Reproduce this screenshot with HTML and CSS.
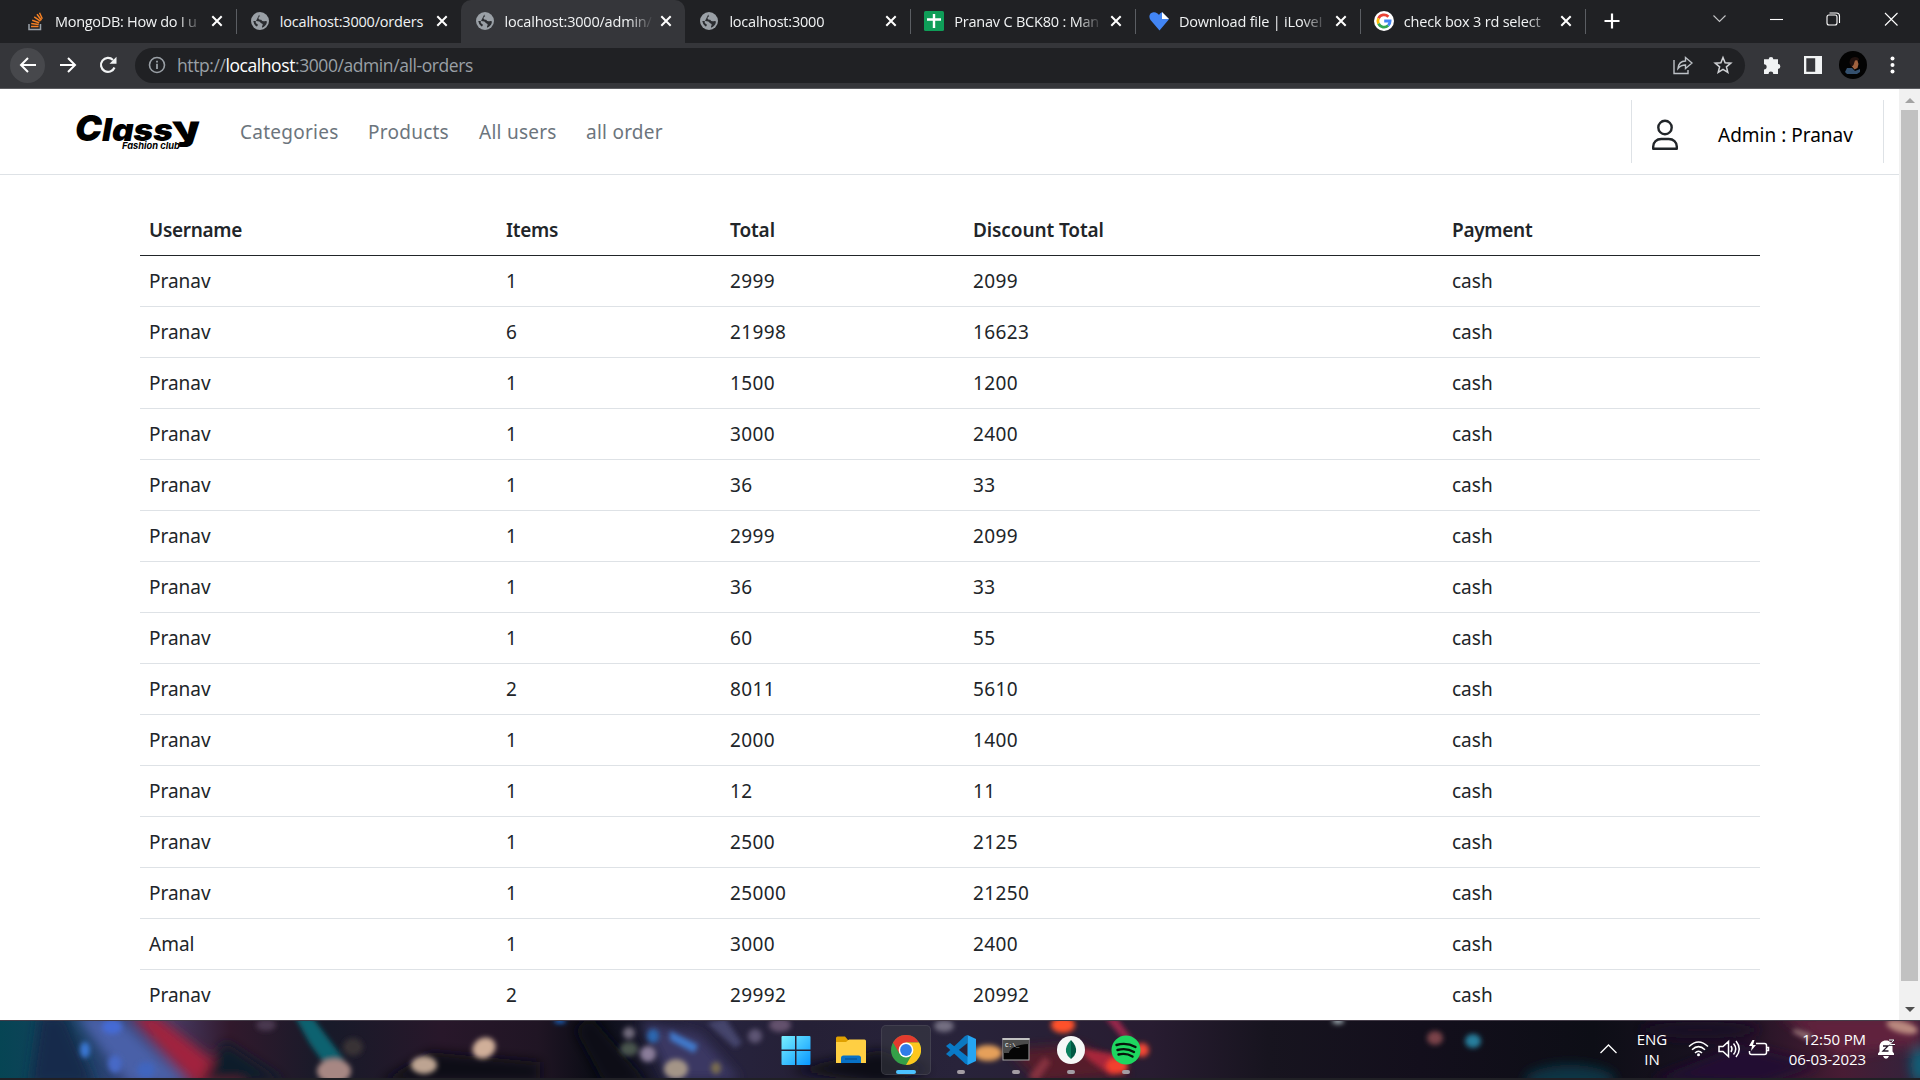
FILE: index.html
```html
<!DOCTYPE html>
<html lang="en">
<head>
<meta charset="utf-8">
<title>All orders</title>
<link rel="stylesheet" href="styles.css">
</head>
<body>
<svg width="0" height="0" class="defs">
  <symbol id="x" viewBox="0 0 12 12"><path d="M1.3 1.3l9.4 9.4M10.7 1.3l-9.4 9.4" stroke="#fff" stroke-width="2" fill="none"/></symbol>
  <symbol id="globe" viewBox="0 0 20 20"><circle cx="10" cy="10" r="9" fill="#9aa0a6"/><path d="M9.500 3q-1 1.600.8 2.100Q8 6 8.600 7.800q.6 1.300 2.600 1 1 2 3.400 1.400 1.500-.5 2.400.3-.5 4.500-5 6.300-.2-2 .6-2.600.6-1.600-1.400-1.900Q9.800 10 6.500 10H3.300q.4 3.500 3.200 5.600 1.500-.5 1.300-2.200-1.800-.7-2.300-2.400" fill="#2b2d31"/></symbol>
</svg>
<div class="screen">
  <header class="tabs">
    <div class="tab"><svg class="fav" viewBox="0 0 20 20"><path d="M4 13v5.500h11.500V13" fill="none" stroke="#9aa3aa" stroke-width="1.500"/><path d="M6 15.500h7.500M6.200 12.600l7.500 1M7.200 9.300l7 2.500M9.200 5.900l6.200 4.200M12 3.200l4.500 6M14.500 1.800l2.800 6" stroke="#f48024" stroke-width="1.500"/></svg><span class="label mongo">MongoDB: How do I u</span><svg class="close"><use href="#x"/></svg></div>
    <div class="tab"><svg class="fav"><use href="#globe"/></svg><span class="label">localhost:3000/orders</span><svg class="close"><use href="#x"/></svg></div>
    <div class="tab active"><svg class="fav"><use href="#globe"/></svg><span class="label">localhost:3000/admin/</span><svg class="close"><use href="#x"/></svg></div>
    <div class="tab"><svg class="fav"><use href="#globe"/></svg><span class="label">localhost:3000</span><svg class="close"><use href="#x"/></svg></div>
    <div class="tab"><svg class="fav" viewBox="0 0 20 20"><rect width="20" height="20" rx="1.500" fill="#0f9d58"/><path d="M3 8.500h14M10 3v14" stroke="#fff" stroke-width="2.400"/></svg><span class="label">Pranav C BCK80 : Man</span><svg class="close"><use href="#x"/></svg></div>
    <div class="tab"><svg class="fav" viewBox="0 0 20 20"><path d="M10.500 19.500L1.500 9C-1 5 1 1.500 4.500 1.200c2.500-.3 4.500 1.300 5.500 2.800.8-1.400 1.700-2.300 3-2.800l7 7z" fill="#4285f4"/><path d="M13 1v7h7z" fill="#fff"/></svg><span class="label">Download file | iLoveI</span><svg class="close"><use href="#x"/></svg></div>
    <div class="tab"><svg class="fav" viewBox="0 0 20 20"><circle cx="10" cy="10" r="10" fill="#fff"/><g fill="none" stroke-width="2.800"><path d="M4.500 7.300a6.100 6.100 0 0 1 9.900-1.500" stroke="#ea4335"/><path d="M4.500 12.700a6.100 6.100 0 0 1 0-5.400" stroke="#fbbc05"/><path d="M14.200 14.400a6.100 6.100 0 0 1-9.700-1.700" stroke="#34a853"/><path d="M10.200 10h5.900a6.100 6.100 0 0 1-1.900 4.400" stroke="#4285f4"/></g></svg><span class="label">check box 3 rd select</span><svg class="close"><use href="#x"/></svg></div>
    <svg class="plus" viewBox="0 0 16 16"><path d="M8 .5v15M.5 8h15" stroke="#fff" stroke-width="2.200"/></svg>
    <svg class="winctl" viewBox="0 0 186 14" fill="none" stroke="#fff" stroke-width="1.100"><path d="M.5 3.500l6 6 6-6" stroke="#c4c5c7"/><path d="M57 7.500h13"/><rect x="114" y="3" width="10" height="10" rx="2"/><path d="M116.500 1h7q3 0 3 3v7"/><path d="M172 1l12.500 12.500M184.500 1L172 13.500"/></svg>
  </header>

  <div class="toolbar">
    <div class="navbtn back"><svg width="18" height="16" viewBox="0 0 18 16"><path d="M17 8H2M9 1L2 8l7 7" fill="none" stroke="#fff" stroke-width="2"/></svg></div>
    <div class="navbtn"><svg width="18" height="16" viewBox="0 0 18 16"><path d="M1 8h15M9 1l7 7-7 7" fill="none" stroke="#fff" stroke-width="2"/></svg></div>
    <div class="navbtn"><svg width="18" height="18" viewBox="0 0 18 18"><path d="M15.500 11.500A7 7 0 1 1 14 4" fill="none" stroke="#f1f3f4" stroke-width="2.200"/><path d="M17.500 .8v7h-7z" fill="#f1f3f4"/></svg></div>
    <div class="omni">
      <svg width="18" height="18" viewBox="0 0 18 18"><circle cx="9" cy="9" r="7.500" fill="none" stroke="#9aa0a6" stroke-width="1.600"/><path d="M9 7.800V13M9 4.800v1.800" stroke="#9aa0a6" stroke-width="1.800"/></svg>
      <span class="url">http://<b>localhost</b>:3000/admin/all-orders</span>
      <svg class="share" width="20" height="20" viewBox="0 0 20 20" fill="none" stroke="#bdc1c6" stroke-width="1.400"><path d="M1 5v13.500h14V15"/><path d="M5 13.500C5.500 8.500 8.500 6 12.500 6V2.500L19 8l-6.500 5.500V10C9 10 7 11 5 13.500z"/></svg>
      <svg width="20" height="20" viewBox="0 0 20 20"><path d="M10 2.500l2.100 5.300 5.700.4-4.400 3.600 1.400 5.600-4.800-3.100-4.800 3.100 1.400-5.600L2.200 8.200l5.700-.4z" fill="none" stroke="#d0d2d5" stroke-width="1.500"/></svg>
    </div>
    <svg class="puzzle" width="20" height="20" viewBox="0 0 20 20"><path d="M2 4.200h4.700a2.300 2.300 0 1 1 4.600 0H16v4.900a2.300 2.300 0 1 1 0 4.700V19h-4.700a2.300 2.300 0 0 0-4.800 0H2v-4.500a2.500 2.500 0 0 0 0-5.300z" fill="#f1f3f4"/></svg>
    <svg class="panel" width="18" height="18" viewBox="0 0 18 18"><path d="M0 0h18v18H0zM2.300 2.300v13.400h8.900V2.300z" fill="#f1f3f4" fill-rule="evenodd"/></svg>
    <svg class="avatar" width="28" height="28" viewBox="0 0 28 28"><circle cx="14" cy="14" r="14" fill="#030303"/><path d="M6 21l2-4 5 0 3 3 5-2 0 3-3 2H8z" fill="#34506e"/><path d="M14 9l4-1 1.500 5-1 4-3 1.500-2.500-3z" fill="#a0623f"/><path d="M10.500 12q0-6 5.500-6 4 0 4 3l-4 .5-1.500 4.500-2 2z" fill="#21120f"/></svg>
    <svg class="dots" width="5" height="18" viewBox="0 0 5 18" fill="#fff"><circle cx="2.500" cy="2.500" r="2"/><circle cx="2.500" cy="9" r="2"/><circle cx="2.500" cy="15.500" r="2"/></svg>
  </div>

  <div class="viewport">
    <main class="page">
      <nav class="topnav">
        <svg class="logo" width="128" height="40" viewBox="0 0 128 40"><g font-family="Inter, sans-serif" font-style="italic" font-weight="900"><text x="0" y="28.500" font-size="36" textLength="27" lengthAdjust="spacingAndGlyphs">C</text><text x="27" y="28.500" font-size="31" textLength="71" lengthAdjust="spacingAndGlyphs">lass</text><text x="100" y="28" font-size="34" font-style="normal" textLength="28" lengthAdjust="spacingAndGlyphs" transform="translate(-5 0) skewX(10)">y</text><text x="47" y="37" font-size="9.500" font-weight="700" textLength="58" lengthAdjust="spacingAndGlyphs">Fashion club</text></g></svg>
        <a class="l1">Categories</a><a class="l2">Products</a><a class="l3">All users</a><a class="l4">all order</a>
        <div class="account">
          <svg width="28" height="32" viewBox="0 0 28 32" fill="none" stroke="#212529" stroke-width="2.400"><circle cx="14" cy="8.500" r="6.700"/><path d="M2.200 29.800v-2.300c0-4.500 3.500-7.500 8-7.500h7.600c4.500 0 8 3 8 7.500v2.300z" stroke-linejoin="round"/></svg>
          <span>Admin : Pranav</span>
        </div>
      </nav>
      <table class="orders">
        <colgroup><col class="c1"><col class="c2"><col class="c3"><col class="c4"><col></colgroup>
        <thead><tr><th>Username</th><th>Items</th><th>Total</th><th>Discount Total</th><th>Payment</th></tr></thead>
        <tbody>
          <tr><td>Pranav</td><td>1</td><td>2999</td><td>2099</td><td>cash</td></tr>
          <tr><td>Pranav</td><td>6</td><td>21998</td><td>16623</td><td>cash</td></tr>
          <tr><td>Pranav</td><td>1</td><td>1500</td><td>1200</td><td>cash</td></tr>
          <tr><td>Pranav</td><td>1</td><td>3000</td><td>2400</td><td>cash</td></tr>
          <tr><td>Pranav</td><td>1</td><td>36</td><td>33</td><td>cash</td></tr>
          <tr><td>Pranav</td><td>1</td><td>2999</td><td>2099</td><td>cash</td></tr>
          <tr><td>Pranav</td><td>1</td><td>36</td><td>33</td><td>cash</td></tr>
          <tr><td>Pranav</td><td>1</td><td>60</td><td>55</td><td>cash</td></tr>
          <tr><td>Pranav</td><td>2</td><td>8011</td><td>5610</td><td>cash</td></tr>
          <tr><td>Pranav</td><td>1</td><td>2000</td><td>1400</td><td>cash</td></tr>
          <tr><td>Pranav</td><td>1</td><td>12</td><td>11</td><td>cash</td></tr>
          <tr><td>Pranav</td><td>1</td><td>2500</td><td>2125</td><td>cash</td></tr>
          <tr><td>Pranav</td><td>1</td><td>25000</td><td>21250</td><td>cash</td></tr>
          <tr><td>Amal</td><td>1</td><td>3000</td><td>2400</td><td>cash</td></tr>
          <tr><td>Pranav</td><td>2</td><td>29992</td><td>20992</td><td>cash</td></tr>
        </tbody>
      </table>
    </main>
    <div class="scrollbar"><svg width="10" height="5" viewBox="0 0 10 5"><path d="M0 5l5-5 5 5z" fill="#a3a3a3"/></svg><div class="thumb"></div><svg class="down" width="10" height="5" viewBox="0 0 10 5"><path d="M0 0h10L5 5z" fill="#505050"/></svg></div>
  </div>

  <footer class="taskbar">
    <svg class="wall" viewBox="0 0 1920 60" preserveAspectRatio="none">
      <defs>
        <linearGradient id="bg"><stop offset="0" stop-color="#064554"/><stop offset=".035" stop-color="#14405c"/><stop offset=".06" stop-color="#2f4377"/><stop offset=".09" stop-color="#473a62"/><stop offset=".12" stop-color="#31192c"/><stop offset=".17" stop-color="#171a29"/><stop offset=".23" stop-color="#28172a"/><stop offset=".28" stop-color="#201524"/><stop offset=".31" stop-color="#0a0c15"/><stop offset=".36" stop-color="#272440"/><stop offset=".42" stop-color="#252036"/><stop offset=".5" stop-color="#28233a"/><stop offset=".6" stop-color="#281c31"/><stop offset=".66" stop-color="#17141f"/><stop offset=".74" stop-color="#130f1c"/><stop offset=".83" stop-color="#0d0e16"/><stop offset=".9" stop-color="#1b1222"/><stop offset=".96" stop-color="#481c34"/><stop offset="1" stop-color="#32233c"/></linearGradient>
        <filter id="b1"><feGaussianBlur stdDeviation="2.600"/></filter>
        <filter id="b2" x="-50%" y="-50%" width="200%" height="200%"><feGaussianBlur stdDeviation="6"/></filter>
      </defs>
      <rect width="1920" height="60" fill="url(#bg)"/>
      <g filter="url(#b2)">
        <path d="M130-5h25l90 70h-50z" fill="#a2233e"/><path d="M75-5h40l75 70h-60z" fill="#4a61a8"/><path d="M40-5h25l30 70H30z" fill="#122b4b"/><path d="M200 62l25-40 60 40z" fill="#101d2c"/><path d="M380 62l50-30 110 10v20z" fill="#090a12"/>
        <path d="M590-5l60 70h-45L575 10z" fill="#070d14"/><path d="M790 50l90-20 50 20-50 15z" fill="#0d0b16"/><path d="M640 0l60 15 40 45h-70z" fill="#3a3863"/><path d="M1010 30l70-5 50 30-90 8z" fill="#571d2b"/>
        <ellipse cx="1570" cy="60" rx="45" ry="15" fill="#0b3444"/><ellipse cx="1700" cy="10" rx="60" ry="8" fill="#1a1028"/><path d="M1650 60l90-35 80 20-60 20z" fill="#240f31"/><path d="M1780-5h140v30l-80 10z" fill="#61233e"/><ellipse cx="1920" cy="45" rx="9" ry="18" fill="#0c637b"/>
      </g>
      <g filter="url(#b1)">
        <path d="M295-3l18 1 32 43-17 8-18-25z" fill="#0b6270"/><ellipse cx="334" cy="51" rx="17" ry="12" fill="#a78783"/><ellipse cx="353" cy="27" rx="10" ry="9" fill="#393335"/><ellipse cx="424" cy="45" rx="13" ry="9" fill="#bda492"/><ellipse cx="484" cy="28" rx="12" ry="10" fill="#d0af99" transform="rotate(-30 484 28)"/>
        <ellipse cx="112" cy="7" rx="10" ry="7" fill="#456bd5"/><ellipse cx="85" cy="30" rx="5" ry="8" fill="#3b77d3"/><ellipse cx="115" cy="44" rx="7" ry="9" fill="#4669c6"/><ellipse cx="146" cy="50" rx="9" ry="8" fill="#4065be"/><ellipse cx="266" cy="5" rx="10" ry="6" fill="#493950"/>
        <ellipse cx="560" cy="1" rx="6" ry="2" fill="#1d7aee"/><ellipse cx="629" cy="13" rx="6" ry="6" fill="#716a7c"/><ellipse cx="629" cy="29" rx="9" ry="7" fill="#4a544e"/><ellipse cx="653" cy="16" rx="6" ry="7" fill="#2b68b0"/><path d="M670 11l28 14-4 8-24-13z" fill="#4079cc"/><ellipse cx="648" cy="34" rx="8" ry="8" fill="#8a7d9a"/><ellipse cx="676" cy="49" rx="12" ry="10" fill="#a49587"/><ellipse cx="716" cy="48" rx="5" ry="6" fill="#7a6d50"/><ellipse cx="780" cy="5" rx="11" ry="7" fill="#64516d"/><ellipse cx="755" cy="16" rx="7" ry="7" fill="#5d5573"/><path d="M707 3l28 25 7-5-17-25z" fill="#45446c"/>
        <ellipse cx="944" cy="6" rx="10" ry="6" fill="#747082"/><ellipse cx="988" cy="33" rx="14" ry="8" fill="#e6a05a"/><ellipse cx="1063" cy="5" rx="12" ry="8" fill="#ff512b"/><path d="M1105-2h12l18 25-5 4z" fill="#99254b"/><path d="M1080 28l35 6 12 18-17 3-22-16z" fill="#a8283a"/><ellipse cx="1117" cy="46" rx="11" ry="8" fill="#f3402d"/><ellipse cx="1142" cy="30" rx="7" ry="7" fill="#f34734"/><path d="M1028 57l16-20 7 5-13 19z" fill="#85313f"/>
        <ellipse cx="1338" cy="1" rx="6" ry="3" fill="#a7b6bb"/><ellipse cx="1435" cy="18" rx="8" ry="7" fill="#7a434a"/><ellipse cx="1473" cy="21" rx="8" ry="7" fill="#257e9c"/><path d="M1795 9l17 5-4 6-16-8z" fill="#967276"/><ellipse cx="1902" cy="7" rx="16" ry="6" fill="#b9897f" transform="rotate(15 1902 7)"/>
      </g>
      <path d="M0 .5h1920" stroke="#443c48"/><path d="M0 59h1920" stroke="#202025" stroke-width="2"/>
    </svg>
    <div class="apps">
      <div class="app"><svg viewBox="0 0 30 30"><defs><linearGradient id="w" x2="1" y2="1" gradientUnits="objectBoundingBox"><stop stop-color="#79f0ff"/><stop offset="1" stop-color="#0796ff"/></linearGradient></defs><path d="M.5 2q0-1 1-1H14v13.500H.500zM15.500 1H28.500q1 0 1 1v12.500h-14zM.5 16H14v14H1.500q-1 0-1-1zM15.500 16h14v13q0 1-1 1h-13z" fill="url(#w)"/></svg></div>
      <div class="app"><svg viewBox="0 0 30 30"><path d="M0 3q0-1.500 1.500-1.500H9l3 3.500h17v8H0z" fill="#dfa000"/><path d="M0 7h10l3-2.500h15.500q1.500 0 1.500 1.500v22H0z" fill="#ffcf43"/><path d="M5 28v-5q0-2.500 2.500-2.500h15Q25 20.500 25 23v5z" fill="#0871c6"/><path d="M9 24h12" stroke="#064a88"/></svg></div>
      <div class="app on"><svg viewBox="0 0 30 30"><circle cx="15" cy="15" r="15" fill="#34a048"/><path d="M2 7.500A15 15 0 0 1 28 7.500H15L8.500 18.700z" fill="#e33b2e"/><path d="M28 7.500A15 15 0 0 1 15 30l6.500-11.300L15 7.500z" fill="#fdc71e"/><circle cx="15" cy="15" r="7.400" fill="#fff"/><circle cx="15" cy="15" r="5.900" fill="#2f7de9"/></svg><i></i></div>
      <div class="app"><svg viewBox="0 0 30 30"><path d="M21.500 0v8L4 22 0 19l19-18z" fill="#0b78c1"/><path d="M0 11l4-3 18 14v8l-3-1.500z" fill="#087bc9"/><path d="M21.500 0L30 4v22l-8.500 4z" fill="#25a5f2"/></svg><i></i></div>
      <div class="app"><svg viewBox="0 0 30 30"><rect x="2" y="3.500" width="26" height="21.500" fill="#050505" stroke="#a6a6a6"/><path d="M2.500 4h25v5Q10 10 8 18H2.500z" fill="#4b4b4b"/><path d="M1.500 4h27" stroke="#c1c1c1" stroke-width="2"/><text x="4" y="12" class="prompt">C:\_</text></svg><i></i></div>
      <div class="app"><svg viewBox="0 0 30 30"><circle cx="15" cy="15" r="14" fill="#f5f7f6"/><path d="M15 5q6 6 5 12-1 4-5 7z" fill="#005943"/><path d="M15 5q-6 6-5 12 1 4 5 7z" fill="#0b805e"/></svg><i></i></div>
      <div class="app"><svg viewBox="0 0 30 30"><circle cx="15" cy="15" r="14.500" fill="#1ed760"/><path d="M5.500 10q10-3 19 2M6.500 15q9-2.500 16.500 2M7.500 19.500q7.500-2 14 2" fill="none" stroke="#06150b" stroke-width="2.400" stroke-linecap="round"/></svg><i></i></div>
    </div>
    <div class="tray">
      <svg width="17" height="10" viewBox="0 0 17 10"><path d="M.5 9l8-8 8 8" fill="none" stroke="#fff" stroke-width="1.300"/></svg>
      <div class="lang">ENG<br>IN</div>
      <svg class="status" width="82" height="20" viewBox="0 0 82 20" fill="none" stroke="#fff" stroke-width="1.500"><path d="M1 7.500q9.500-9 19 0M4 10.800q6.500-6.400 13 0M7 14q3.500-3.500 7 0"/><circle cx="10.500" cy="15.800" r="1.500" fill="#fff" stroke="none"/><path d="M31 7.500h4l5.500-5v15l-5.500-5h-4zM43 7q2 3 0 6M45.500 4.500q4.500 5.500 0 11M48 2q6.500 8 0 16"/><path d="M68 4.500h8.500q2 0 2 2v7q0 2-2 2h-13q-2 0-2-2V12M79 8.500h1.500v3H79"/><path d="M64.500 1l-3.500 6h3l-1 5 5-6h-3l1.500-5z" fill="#fff" stroke="none"/></svg>
      <div class="clock">12:50 PM<br>06-03-2023</div>
      <svg class="bell" width="19" height="20" viewBox="0 0 19 20"><path d="M1 16v-1.500l1.500-2V8C2.500 4 5 1.500 9 1.500c4 0 6.500 2.500 6.500 6.500v4.500l1.500 2V16zM6 17h6q-1 2.800-3 2.800T6 17z" fill="#fff"/><path d="M6 7h5l-5 5h5.500M12 1.500h5L13 6h5" fill="none" stroke="#241729" stroke-width="1.300"/><path d="M12 1h5l-4 4.500h5" fill="none" stroke="#fff"/></svg>
    </div>
  </footer>
</div>
</body>
</html>
```
FILE: styles.css
```css
* { box-sizing: border-box; }
body { margin: 0; background: #fff; overflow: hidden; }
.defs { display: block; }
svg { flex: none; display: block; }
.screen { width: 1920px; height: 1080px; display: flex; flex-direction: column; font-family: "Open Sans", sans-serif; }

/* tab strip */
.tabs { height: 43px; flex: none; background: #202124; display: flex; padding-left: 11px; color: #f1f3f4; }
.tab { width: 224.800px; flex: none; display: flex; align-items: center; padding: 0 13px 1px 14px; position: relative; }
.tab::after { content: ""; position: absolute; right: -1px; top: 9px; width: 1px; height: 25px; background: #5b5e63; }
.tab:nth-child(2)::after, .tab.active::after { display: none; }
.tab.active { background: #35363a; border-radius: 10px 10px 0 0; }
.fav { width: 20px; height: 20px; margin-right: 10px; }
.label { width: 150px; overflow: hidden; white-space: nowrap; font-size: 14.500px; letter-spacing: -.2px; -webkit-mask-image: linear-gradient(90deg, #000 82%, transparent 99%); mask-image: linear-gradient(90deg, #000 82%, transparent 99%); }
.mongo { letter-spacing: -.3px; }
.tab:nth-child(2) .label { -webkit-mask-image: none; mask-image: none; }
.close { width: 12px; height: 12px; margin-left: auto; }
.plus { width: 16px; height: 16px; margin: 13px 0 0 19px; }
.winctl { width: 186px; height: 14px; margin: 12px 0 0 93px; }

/* toolbar */
.toolbar { height: 46px; flex: none; background: #35363a; border-bottom: 1px solid #5b5c60; display: flex; align-items: center; padding: 0 0 1px 10px; }
.navbtn { width: 35px; height: 35px; margin-right: 5px; border-radius: 50%; display: flex; align-items: center; justify-content: center; }
.back { background: #47484c; }
.omni { width: 1610px; height: 35px; margin-left: 5px; border-radius: 18px; background: #202124; display: flex; align-items: center; padding: 0 12px 0 13px; }
.url { margin-left: 11px; font-size: 17.500px; letter-spacing: -.42px; color: #9aa0a6; white-space: nowrap; }
.url b { font-weight: 400; color: #fff; }
.share { margin-left: auto; margin-right: 20px; }
.puzzle { margin-left: 17px; }
.panel { margin-left: 22px; }
.avatar { margin-left: 17px; }
.dots { margin-left: 23px; }

/* page */
.viewport { height: 931px; flex: none; display: flex; overflow: hidden; }
.page { width: 1899px; font-family: "Noto Sans", sans-serif; font-size: 19px; color: #212529; }
.topnav { height: 86px; border-bottom: 1px solid #dee2e6; display: flex; align-items: center; padding-left: 75px; }
.topnav a { color: #6c757d; line-height: 30px; white-space: nowrap; letter-spacing: .25px; }
.logo { margin-right: 37px; overflow: visible; }
.l1 { width: 128px; }
.l2 { width: 111px; }
.l3 { width: 107px; }
.account { width: 253px; height: 63px; margin: 0 15px 0 auto; border: solid #dee2e6; border-width: 0 1px; display: flex; align-items: center; padding-left: 19px; padding-top: 6px; color: #000; white-space: nowrap; }
.account span { margin-left: 39px; }
.orders { width: 1620px; margin: 30px 0 0 140px; table-layout: fixed; border-collapse: separate; border-spacing: 0; }
.c1 { width: 356px; }
.c2 { width: 224px; }
.c3 { width: 243px; }
.c4 { width: 479px; }
.orders th, .orders td { height: 51px; padding: 0 0 1px 10px; line-height: 30px; text-align: left; border-bottom: 1px solid #dee2e6; }
.orders th:first-child, .orders td:first-child { padding-left: 9px; }
.orders td:nth-child(3), .orders td:nth-child(4) { letter-spacing: .4px; }
.orders th { font-weight: 600; letter-spacing: -.3px; border-bottom-color: #212529; }
.orders th:nth-child(3), .orders th:nth-child(4) { letter-spacing: -.1px; }
.scrollbar { width: 21px; background: #f1f1f1; display: flex; flex-direction: column; align-items: center; padding-top: 9px; }
.thumb { width: 17px; height: 871px; margin-top: 7px; background: #c1c1c1; }
.down { margin-top: 26px; }

/* taskbar */
.taskbar { height: 60px; flex: none; position: relative; display: flex; justify-content: space-between; color: #fff; }
.wall { position: absolute; inset: 0; width: 1920px; height: 60px; }
.apps, .tray { position: relative; }
.apps { display: flex; gap: 5px; padding: 5px 0 0 771px; }
.app { width: 50px; height: 50px; display: flex; flex-direction: column; align-items: center; padding-top: 10px; }
.app svg { width: 30px; height: 30px; }
.app i { width: 8px; height: 4px; margin-top: 5px; border-radius: 2px; background: #a39da4; }
.app.on { background: rgba(60, 62, 70, .5); border-radius: 5px; border: 1px solid rgba(130, 130, 140, .2); padding-top: 9px; }
.on i { width: 20px; background: #4cc2ff; }
.prompt { font: 6px "Liberation Mono", monospace; fill: #fff; }
.tray { display: flex; align-items: center; padding: 0 24px 2px 0; font-size: 15px; line-height: 20px; }
.lang { width: 40px; margin-left: 15px; text-align: center; }
.status { margin-left: 16px; margin-right: 9px; }
.clock { width: 87px; text-align: right; white-space: nowrap; letter-spacing: -.1px; }
.bell { margin-left: 11px; }
```
